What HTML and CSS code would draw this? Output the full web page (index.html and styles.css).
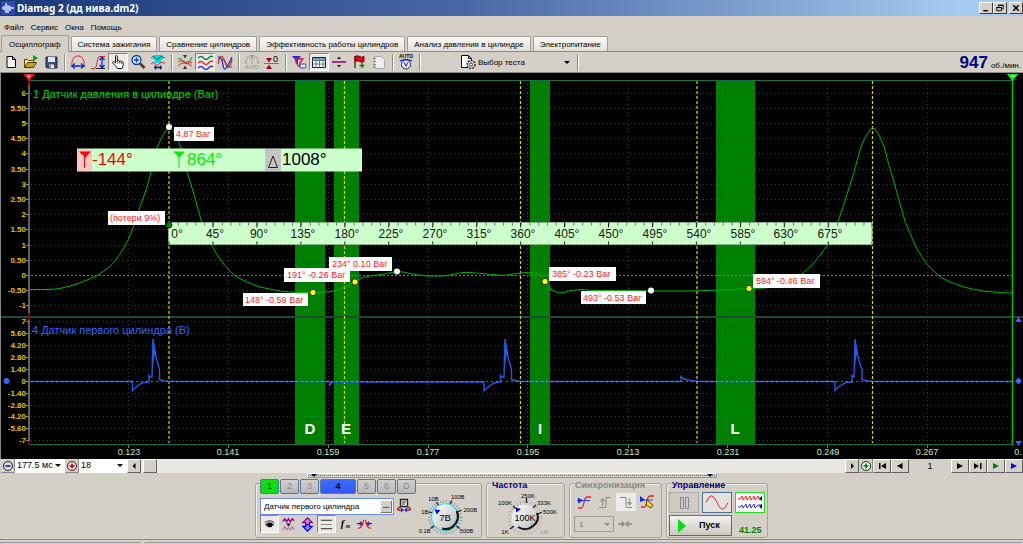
FILE: index.html
```html
<!DOCTYPE html>
<html lang="ru">
<head>
<meta charset="utf-8">
<title>Diamag 2 (дд нива.dm2)</title>
<link rel="stylesheet" href="styles.css">
</head>
<body>
<header class="titlebar">
  <svg class="app-icon" viewBox="0 0 14 14"><rect width="14" height="14" fill="#3048b0"/><path d="M1 7h1M3 5v4M5 2v10M7 4v8M9 5v5M11 6v2M12 7h1" stroke="#dfe8ff" stroke-width="1.5"/></svg>
  <h1 class="title">Diamag 2 (дд нива.dm2)</h1>
  <div class="win-buttons">
    <button class="win-btn" aria-label="Свернуть"><svg viewBox="0 0 12 11"><path d="M3 8.500h5" stroke="#000" stroke-width="1.6"/></svg></button>
    <button class="win-btn" aria-label="Восстановить"><svg viewBox="0 0 12 11"><path d="M4.500 4V2.500h5v4h-2M2.500 5h5v3.500h-5zM4 2.500h6M2 5h6" fill="none" stroke="#000"/></svg></button>
    <button class="win-btn win-close" aria-label="Закрыть"><svg viewBox="0 0 12 11"><path d="M3 2.500l6 6M9 2.500l-6 6" stroke="#000" stroke-width="1.700"/></svg></button>
  </div>
</header>
<nav class="menu">
  <button class="menu-item">Файл</button><button class="menu-item">Сервис</button><button class="menu-item">Окна</button><button class="menu-item">Помощь</button>
</nav>
<div class="tabs" role="tablist">
  <button class="tab active" role="tab" aria-selected="true">Осциллограф</button>
  <button class="tab" role="tab">Система зажигания</button>
  <button class="tab" role="tab">Сравнение цилиндров</button>
  <button class="tab" role="tab">Эффективность работы цилиндров</button>
  <button class="tab" role="tab">Анализ давления в цилиндре</button>
  <button class="tab" role="tab">Электропитание</button>
</div>
<div class="toolbar">
  <button class="tool" aria-label="Новый"><svg viewBox="0 0 16 16"><path d="M4 2.500h5.500l3 3V13.500H4z" fill="#fff" stroke="#000"/><path d="M9.500 2.500v3h3" fill="none" stroke="#000"/></svg></button>
  <button class="tool" aria-label="Открыть"><svg viewBox="0 0 16 16"><path d="M1.500 13V5.500h3l1 1h5V9" fill="#ffe97a" stroke="#5a4a00"/><path d="M1.500 13.500l3-5h9l-3 5z" fill="#c8a020" stroke="#4a3c00"/><path d="M10 1l5 3-5 3.500z" fill="#0a0"/></svg></button>
  <button class="tool" aria-label="Сохранить"><svg viewBox="0 0 16 16"><path d="M3 3h11v11H4l-1-1z" fill="#44506a" stroke="#1d2740"/><path d="M5 3h7v5H5z" fill="#dfe8f6"/><path d="M6 10.500h5V14H6z" fill="#e8e8f0"/><path d="M7 11v3" stroke="#223"/></svg></button>
  <i class="sep"></i>
  <button class="tool" aria-label="Период"><svg viewBox="0 0 16 16"><path d="M1 13c1-2 1-3 1-5C3 3.500 5 2 8 2s5 1.500 6 6c0 2 0 3 1 5" fill="none" stroke="#f02020"/><path d="M2 12h12M5 9.500L2 12l3 2.500M11 9.500l3 2.500-3 2.500" fill="none" stroke="#0030d0" stroke-width="1.300"/></svg></button>
  <button class="tool" aria-label="Амплитуда"><svg viewBox="0 0 16 16"><path d="M1 14.500h3c4 0 2-12 6-12h5" fill="none" stroke="#f02020"/><path d="M12 3v10M9.500 6L12 3l2.500 3M9.500 11l2.500 3 2.500-3" fill="none" stroke="#0030d0" stroke-width="1.300"/><path d="M6 14.500h9" stroke="#222"/></svg></button>
  <button class="tool pressed" aria-label="Рука"><svg viewBox="0 0 16 16"><path d="M5.500 9V2.500c0-1.300 1.800-1.300 1.800 0V7c.5-1 1.900-.7 2 .3.600-.8 1.800-.5 2 .5.700-.6 1.900-.3 1.900.8 0 2.500 0 3.500-1.200 5.900H7.500C6 12 4.500 11 2.600 8.800 2 7.800 3.500 7 4.300 8z" fill="#fff" stroke="#111"/><path d="M7.300 7v2.500M9.300 7.500v2M11.300 8v2" stroke="#111" stroke-width=".8"/></svg></button>
  <button class="tool" aria-label="Лупа"><svg viewBox="0 0 16 16"><circle cx="6.500" cy="6" r="4.500" fill="#cfe8ff" stroke="#1040a0" stroke-width="1.300"/><path d="M6.500 3.500v5M4 6h5" stroke="#1040d0" stroke-width="1.300"/><path d="M10 9.500l4.500 4.500" stroke="#603010" stroke-width="2.500"/></svg></button>
  <button class="tool" aria-label="Диапазон"><svg viewBox="0 0 16 16"><path d="M3 1h10v3l-2.500 3 2.500 2H3l2.500-2L3 4z" fill="#00d8e0"/><path d="M1 4q2-3 4 0t4 0 6 0" fill="none" stroke="#087850"/><path d="M1 10q2-3 4 0t4 0 6-1" fill="none" stroke="#f03030"/><path d="M4 13.500h8M5.500 11.500v4M10.500 11.500v4" stroke="#002080" stroke-width="1.300"/></svg></button>
  <i class="sep"></i>
  <button class="tool" aria-label="Совместить"><svg viewBox="0 0 16 16"><path d="M1 5q2-2 4 1t6 2q2 0 4-5" fill="none" stroke="#108020"/><path d="M1 8q3-3 6 0t8 0M1 12q3-4 7-3t7 3" fill="none" stroke="#f02020"/><path d="M6 1h4L8 4.500zM6 15h4l-2-3.500z" fill="#333"/></svg></button>
  <button class="tool pressed" aria-label="Раздельно"><svg viewBox="0 0 16 16"><path d="M1 4q3-3 5.500 0t5 0T16 3" fill="none" stroke="#008040" stroke-width="1.300"/><path d="M1 9q3-3 5.500 0t5 0T16 8" fill="none" stroke="#f02020" stroke-width="1.300"/><path d="M1 14q3-3 5.500 0t5 0T16 13" fill="none" stroke="#2030e0" stroke-width="1.300"/></svg></button>
  <button class="tool" aria-label="Вместе"><svg viewBox="0 0 16 16"><path d="M1 10Q4-4 8 8t7-3" fill="none" stroke="#f02020" stroke-width="1.300"/><path d="M1 3q4 0 5 8t5 0 4-8" fill="none" stroke="#2030e0" stroke-width="1.300"/><path d="M1 6q3-4 7 2t7 5" fill="none" stroke="#107040"/></svg></button>
  <i class="sep"></i>
  <button class="tool" aria-label="Авто" disabled><svg viewBox="0 0 16 16"><path d="M2 10C1 5 4 1.500 8 1.500S15 5 14 10M8 2v8M5.500 5L8 2l2.500 3" fill="none" stroke="#999"/><text x="8" y="15" class="tiny gray-fill" text-anchor="middle">AUTO</text></svg></button>
  <button class="tool" aria-label="Ноль"><svg viewBox="0 0 16 16"><path d="M0 9.500h15" stroke="#777"/><path d="M2 4h6L5 8.500zM2 15h6l-3-4.500z" fill="#b00010"/><text x="9" y="8" class="zero">0</text></svg></button>
  <i class="sep"></i>
  <button class="tool" aria-label="Фильтр"><svg viewBox="0 0 16 16"><path d="M1 2h9L7 6v5L4.500 9V6z" fill="#1030f0"/><path d="M4 5h8l-3 3.500V13l-2.500-2V9z" fill="none" stroke="#f01030" stroke-width="1.300"/><rect x="9" y="10" width="6" height="4" rx="1.500" fill="#dde8ff" stroke="#2040a0"/></svg></button>
  <button class="tool pressed" aria-label="Таблица"><svg viewBox="0 0 16 16"><path d="M1.500 3.500h13v10h-13z" fill="#fff" stroke="#123"/><path d="M2 4h12v2H2z" fill="#7aaee8"/><path d="M1.500 6.500h13M5 4v9.500M8.500 4v9.500M12 4v9.500M2 10h12" stroke="#678"/></svg></button>
  <button class="tool" aria-label="Линия"><svg viewBox="0 0 16 16"><path d="M1 8h14" stroke="#900080" stroke-width="1.500"/><path d="M6 5h4L8 2.500zM6 11h4l-2 2.500z" fill="#222"/></svg></button>
  <button class="tool" aria-label="Флаг"><svg viewBox="0 0 16 16"><path d="M4 2v12" stroke="#502010" stroke-width="1.300"/><path d="M4 2.500q2.500-1.500 4.500 0t4.500 0v5q-2 1.500-4.500 0T4 7.500z" fill="#e00018" stroke="#700"/><path d="M11 9v5M8.500 11.500h5" stroke="#080" stroke-width="1.500"/></svg></button>
  <button class="tool" aria-label="Отчёт" disabled><svg viewBox="0 0 16 16"><path d="M3.500 2.500h7l3 3v9h-10z" fill="#eee" stroke="#aaa"/><path d="M2 4.500h3M2 7.500h3M2 10.500h3M2 13h3" stroke="#888"/></svg></button>
  <i class="sep"></i>
  <button class="tool" aria-label="Автоизмерение"><svg viewBox="0 0 16 16"><text x="8" y="4" class="tiny bold" text-anchor="middle">AUTO</text><path d="M2 7q6-3 12 0" fill="none" stroke="#2040e0" stroke-width="1.500"/><circle cx="8" cy="10.500" r="4.500" fill="#eef" stroke="#224"/><path d="M6 8.500l2 3.500 2-3.500" fill="none" stroke="#2040f0" stroke-width="1.200"/></svg></button>
  <i class="sep"></i>
  <label class="test-pick">
    <svg class="tool-ico" viewBox="0 0 16 16"><path d="M1.500 1.500h7l3 3v9h-10z" fill="#fff" stroke="#111"/><path d="M8.500 1.500v3h3" fill="none" stroke="#111"/><circle cx="11" cy="10.500" r="4" fill="#c8d8c8" stroke="#334" stroke-width="1.500" stroke-dasharray="2 1"/><circle cx="11" cy="10.500" r="1.500" fill="#fff" stroke="#344"/></svg>
    <span class="pick flat"><select aria-label="Выбор теста"><option>Выбор теста</option></select></span>
  </label>
  <i class="sep"></i>
  <div class="rpm"><b class="rpm-value">947</b><span class="rpm-unit">об./мин.</span></div>
</div>

<main class="scope">
<svg class="plot" viewBox="0 73 1023 386" role="img" aria-label="Осциллограмма">
  <rect y="73" width="1023" height="386" fill="#000"/>
  <g fill="#008000"><rect x="295" y="81" width="30" height="363"/><rect x="334" y="81" width="25" height="363"/><rect x="530" y="81" width="20" height="363"/><rect x="716" y="81" width="39" height="363"/></g>
  <path class="grid" d="M31 93.500H1012M31 108.500H1012M31 123.500H1012M31 138.500H1012M31 153.500H1012M31 169.500H1012M31 184.500H1012M31 199.500H1012M31 214.500H1012M31 229.500H1012M31 245.500H1012M31 260.500H1012M31 290.500H1012M31 305.500H1012M31 321.500H1012M31 333.500H1012M31 345.500H1012M31 357.500H1012M31 369.500H1012M31 393.500H1012M31 405.500H1012M31 416.500H1012M31 428.500H1012M31 440.500H1012"/>
  <path class="grid" d="M128.500 84V444M228.500 84V444M328.500 84V444M428.500 84V444M527.500 84V444M628.500 84V444M727.500 84V444M827.500 84V444M927.500 84V444"/>
  <path d="M31 275.500H1012" stroke="#777" stroke-dasharray="2 2"/>
  <path d="M29 80.500H1013M29 444.500H1013" stroke="#1c7048"/>
  <path d="M0 317H1023" stroke="#1c4a34" stroke-width="2"/>
  <path d="M128.500 445v3M228.500 445v3M328.500 445v3M428.500 445v3M527.500 445v3M628.500 445v3M727.500 445v3M827.500 445v3M927.500 445v3" stroke="#777"/>
  <path d="M.5 73V459" stroke="#888"/>
  <path d="M29 85V313M29 320V441" stroke="#606060" stroke-width="2"/>
  <path d="M29 80V85M29 313V320M29 441V445" stroke="#900" stroke-width="2"/>
  <path d="M26 93.500h3M26 108.500h3M26 123.500h3M26 138.500h3M26 153.500h3M26 169.500h3M26 184.500h3M26 199.500h3M26 214.500h3M26 229.500h3M26 245.500h3M26 260.500h3M26 275.500h3M26 290.500h3M26 305.500h3M26 321.500h3M26 333.500h3M26 345.500h3M26 357.500h3M26 369.500h3M26 381.500h3M26 393.500h3M26 405.500h3M26 416.500h3M26 428.500h3M26 440.500h3" stroke="#888"/>
  <g class="scale">
    <text x="26" y="96">6</text><text x="26" y="111">5.50</text><text x="26" y="126">5</text><text x="26" y="141">4.50</text><text x="26" y="156">4</text><text x="26" y="172">3.50</text><text x="26" y="187">3</text><text x="26" y="202">2.50</text><text x="26" y="217">2</text><text x="26" y="232">1.50</text><text x="26" y="248">1</text><text x="26" y="263">0.50</text><text x="26" y="278">0</text><text x="26" y="293">-0.50</text><text x="26" y="308">-1</text>
    <text x="26" y="324">7</text><text x="26" y="336">5.60</text><text x="26" y="348">4.20</text><text x="26" y="360">2.80</text><text x="26" y="372">1.40</text><text x="26" y="384">0</text><text x="26" y="396">-1.40</text><text x="26" y="408">-2.80</text><text x="26" y="419">-4.20</text><text x="26" y="431">-5.60</text><text x="26" y="443">-7</text>
  </g>
  <g class="times">
    <text x="129" y="455">0.123</text><text x="228" y="455">0.141</text><text x="328" y="455">0.159</text><text x="428" y="455">0.177</text><text x="528" y="455">0.195</text><text x="628" y="455">0.213</text><text x="728" y="455">0.231</text><text x="828" y="455">0.249</text><text x="927" y="455">0.267</text><text x="1018" y="455">0.</text>
  </g>
  <path d="M169 81V443M344.500 81V443M520.500 81V443M697 81V443M872.500 81V443" stroke="#d8d800" stroke-width="1.200" stroke-dasharray="3 2"/>
  <text x="33" y="98" class="chan green">1 Датчик давления в цилиндре (Bar)</text>
  <text x="32" y="334" class="chan blue">4 Датчик первого цилиндра (В)</text>

  <path fill="none" stroke="#00b400" d="M29 289.500H48L56 289 62 288 70 286 77 284 87 280 98 275 104 271 110 266.500 115 261 120 254 124 247.500 128 240 131 233 134 225 140 207 147 187 151 172 157 148 160 141 162 137 164.500 132.500 167 129.500 169 127.500 171 128.500 173 130.500 176 135 178 140 181 148 184 160 187 172 193.500 193 201.500 221.500 206 233 212 246 216 253 220 259 224 264.500 228 269 232 273 237 277 245 281 253 284.500 260 287 267 288.500 275 290 283 291.500 297 292.500H315L327 292 334 291 340 289 348 285.500 355 281.500 363 277.500 370 276 377 275 387 273.500 397 271.500 403 272 410 273.500 418 275 427 276H443L450 275 457 273.500 463 272.500 470 272.500 487 274 503 275.500 510 274.500 517 273.500 527 272.500 537 273.500 542 276.500 545 281.500 548 286 552 290 556 292 560 293 566 292 570 290.500 575 290 583 289.500 592 290.500H625L651 291H690L720 290 749 288.500 765 288 775 286.500 787 282 795 278 803 273 809 268 815 261.500 821 254 827 245.500 833 234 838 221.500 842 210 848 191 854 172 860.500 148 863.500 141 866 136 868.500 132 870.500 129 872.500 127.500 875 129 877 132 880 137 884.500 148 887.500 160 891 172 897 193 905 221.500 910 233 915.500 246 919.500 253 923.500 259 927.500 264.500 931.500 269 936 273 940.500 277 948 281 956.500 284.500 964 287 970 288.500 978 290 986 291.500 1000 292.500 1012 293"/>
  <path fill="none" stroke="#2458e8" stroke-width="1.400" d="M29 381.500H132.500V390.500L135 388 138 385.500 142 383 149 382V375.500L150 377H152L153 339 154 345 155 350 156 357 158 364 159.500 369V379.500L165 381 175 381.500H330V385L332 382H484V390.500L487 388 490 385.500 494 383 500.500 382V375.500L501.500 377H504L505 339 506 345 507 350 508 357 510 364 511.500 369V379.500L517 381 525 381.500H681V376.500L684 379 691 380.500 700 381.500H835V390.500L838 387.500 842 384.500 846 382.500 852 382V375.500L854 377 855 339 856 345 857 350 858 357 860 364 862 369V379.500L867 381 875 381.500H1012"/>
  <path fill="#2458e8" d="M152 376L153 339 155.500 352 154 358zM504 376L505 339 507.500 352 506 358zM854 376L855 339 857.500 352 856 358z"/>
  <path d="M31 381.500H1012" stroke="#a0b8e0" stroke-opacity=".6" stroke-dasharray="2 3"/>
  <path d="M1012.500 80V445" stroke="#00c000" stroke-width="1.500"/>

  <g class="phase"><text x="310" y="434">D</text><text x="346" y="434">E</text><text x="540" y="434">I</text><text x="735" y="434">L</text></g>

  <rect x="77" y="148.500" width="285" height="23" fill="#cfc"/><rect x="77" y="149" width="15" height="22" fill="#ffc4c4"/><rect x="265" y="149" width="16" height="22" fill="#c4c4c4"/>
  <path d="M79 151.500h12l-5.500 6z" fill="red"/><path d="M84.500 156v12" stroke="red"/><path d="M173 151.500h12l-5.500 6z" fill="#0e0"/><path d="M179 156v12" stroke="#0e0"/><path d="M268.500 167.500L273 156l4.500 11.500z" fill="none" stroke="#222"/>
  <g class="angles"><text x="92" y="165" fill="#f00">-144°</text><text x="187" y="165" fill="#0e0">864°</text><text x="282" y="165" fill="#000">1008°</text></g>

  <rect x="168.500" y="222.500" width="703.500" height="22" fill="#cfc" stroke="#8ab08a"/>
  <path d="M169 224H872" stroke="#667766" stroke-width="3" stroke-dasharray="1 7.790"/>
  <path d="M168.500 225H872" stroke="#222" stroke-width="5" stroke-dasharray="1 42.950"/><path d="M168.500 243H872" stroke="#222" stroke-width="3" stroke-dasharray="1 42.950"/>
  <g class="ruler"><text x="177" y="238">0°</text><text x="215" y="238">45°</text><text x="259" y="238">90°</text><text x="303" y="238">135°</text><text x="347" y="238">180°</text><text x="391" y="238">225°</text><text x="435" y="238">270°</text><text x="479" y="238">315°</text><text x="523" y="238">360°</text><text x="567" y="238">405°</text><text x="611" y="238">450°</text><text x="655" y="238">495°</text><text x="699" y="238">540°</text><text x="743" y="238">585°</text><text x="786" y="238">630°</text><text x="830" y="238">675°</text></g>

  <g fill="#fff"><rect x="174" y="127" width="40" height="14"/><rect x="108" y="211" width="57" height="14"/><rect x="329" y="257" width="63" height="14"/><rect x="284" y="268" width="66" height="14"/><rect x="243" y="293" width="65" height="13"/><rect x="549" y="267" width="67" height="14"/><rect x="581" y="291" width="65" height="13"/><rect x="753" y="274" width="67" height="14"/></g>
  <g class="notes"><text x="176" y="137">4.87 Bar</text><text x="110" y="221">(потери 9%)</text><text x="332" y="267">234° 0.10 Bar</text><text x="287" y="278">191° -0.26 Bar</text><text x="245" y="303">148° -0.59 Bar</text><text x="552" y="277">385° -0.23 Bar</text><text x="583" y="301">493° -0.53 Bar</text><text x="756" y="284">594° -0.46 Bar</text></g>

  <g fill="#fff"><circle cx="169" cy="127" r="3"/><circle cx="397" cy="271.500" r="3"/><circle cx="651" cy="290.500" r="3"/></g>
  <g fill="#ff0" stroke="#220"><circle cx="313" cy="292.500" r="3.200"/><circle cx="355" cy="282" r="3.200"/><circle cx="545" cy="281.500" r="3.200"/><circle cx="749" cy="288.500" r="3.200"/></g>
  <circle cx="169" cy="225" r="3" fill="#080" stroke="#031"/>
  <circle cx="6.500" cy="381" r="3" fill="#36f"/>
  <path d="M23 74h12l-6 7z" fill="#f01818"/><path d="M27 76h4M29 75v3" stroke="#fbb"/><path d="M1006.500 74h12l-6 7z" fill="#10e810"/><path d="M1011 76h4" stroke="#cfc"/>
  <path d="M1015 322h7l-3.500-5zM1015 441h7l-3.500 5zM1015 381l3.500-3.500 3.500 3.500-3.500 3.500z" fill="#36f"/>
</svg>
</main>

<div class="timebar">
  <button class="round" aria-label="Сжать"><svg viewBox="0 0 12 12"><circle cx="6" cy="6" r="4.500" fill="#ddd" stroke="#222"/><path d="M3.500 6h5" stroke="#00a" stroke-width="1.500"/></svg></button>
  <span class="pick"><select class="w-span" aria-label="Развёртка"><option>177.5 мс</option></select></span>
  <button class="round" aria-label="Растянуть"><svg viewBox="0 0 12 12"><circle cx="6" cy="6" r="4.500" fill="#fdd" stroke="#222"/><path d="M3.500 6h5M6 3.500v5" stroke="#a00" stroke-width="1.500"/></svg></button>
  <span class="pick"><select class="w-zoom" aria-label="Масштаб"><option>18</option></select></span>
  <div class="track">
    <button class="bevel" aria-label="Влево"><svg viewBox="0 0 12 12"><path d="M7.500 3v6L4.500 6z"/></svg></button>
    <button class="bevel thumb" aria-label="Ползунок"></button>
    <button class="bevel last" aria-label="Вправо"><svg viewBox="0 0 12 12"><path d="M5 3v6l3-3z"/></svg></button>
  </div>
  <button class="round" aria-label="Добавить"><svg viewBox="0 0 12 12"><circle cx="6" cy="6" r="4.500" fill="#efe" stroke="#222"/><path d="M3.500 6h5M6 3.500v5" stroke="#080" stroke-width="1.700"/></svg></button>
  <button class="bevel nav" aria-label="Первый"><svg viewBox="0 0 12 12"><path d="M3 3h1.500v6H3zM10 3v6L5 6z"/></svg></button>
  <button class="bevel nav" aria-label="Предыдущий"><svg viewBox="0 0 12 12"><path d="M8.500 3v6L3 6z"/></svg></button>
  <output class="page">1</output>
  <button class="bevel nav" aria-label="Следующий"><svg viewBox="0 0 12 12"><path d="M3 3v6l6-3z"/></svg></button>
  <button class="bevel nav" aria-label="Последний"><svg viewBox="0 0 12 12"><path d="M2 3v6l5-3zM8 3h1.500v6H8z"/></svg></button>
  <button class="bevel nav" aria-label="Воспроизвести"><svg viewBox="0 0 12 12"><path d="M3 3v6l6-3z" fill="#008000"/></svg></button>
  <button class="bevel nav" aria-label="Повтор"><svg viewBox="0 0 12 12"><path d="M3 3v6l6-3z" fill="#00f"/></svg></button>
</div>

<div class="splitter"><span class="grip"></span></div>

<div class="panels">
  <section class="group channel">
    <div class="channel-main">
      <div class="chan-tabs">
        <button class="ch on">1</button><button class="ch">2</button><button class="ch">3</button><button class="ch sel">4</button><button class="ch">5</button><button class="ch">6</button><button class="ch">D</button>
      </div>
      <div class="name-row">
        <span class="name-box"><input type="text" aria-label="Датчик" value="Датчик первого цилиндра"><button class="more" aria-label="Выбрать">...</button></span>
        <button class="tool" aria-label="Прибор"><svg viewBox="0 0 16 16"><path d="M4.500 1.500h7v7h-7z" fill="#eee" stroke="#222" stroke-width="1.400"/><path d="M6 4h4M6 6h3" stroke="#333"/><path d="M5 9q-4 .5-3 3h3M11 9q4 .5 3 3h-3" fill="none" stroke="#d01020" stroke-width="1.300"/><path d="M5 9.500v5L8 12zM11 9.500v5L8 12z" fill="#1030e0"/></svg></button>
      </div>
      <div class="chan-tools">
        <button class="tool pressed" aria-label="Видимость"><svg viewBox="0 0 16 16"><path d="M3 8q5-5 10 0-5 6-10 0z" fill="#444"/><circle cx="8.500" cy="8.500" r="2.500" fill="#000"/><path d="M3 6q5-4 10 0" fill="none" stroke="#222"/></svg></button>
        <button class="tool" aria-label="Масштаб сигнала"><svg viewBox="0 0 16 16"><path d="M2 5l2-3 2 3 2-3 2 3 2-3 2 2" fill="none" stroke="#900090" stroke-width="1.500"/><path d="M2 14l2-4 2 4 2-3 2 3 2-4 2 4" fill="none" stroke="#c040b0"/><path d="M5.500 7h5L8 10z" fill="#111"/></svg></button>
        <button class="tool" aria-label="Смещение"><svg viewBox="0 0 16 16"><path d="M8 1L3 6h3v2h4V6h3z" fill="#c8c" stroke="#800080" stroke-width="1.300"/><path d="M8 15l-5-5h3V8h4v2h3z" fill="#88f" stroke="#00e" stroke-width="1.300"/></svg></button>
        <button class="tool pressed" aria-label="Линии"><svg viewBox="0 0 16 16"><path d="M2 3.500h12M2 12.500h12" stroke="#222"/><path d="M2 8h12" stroke="#222" stroke-dasharray="1 1"/></svg></button>
        <button class="tool" aria-label="Функция"><svg viewBox="0 0 16 16"><text x="3" y="11" class="fx">f</text><text x="8" y="12" class="fx small">м</text></svg></button>
        <button class="tool" aria-label="Центр"><svg viewBox="0 0 16 16"><path d="M1 12q5 0 6-9M9 3q1 9 6 9" fill="none" stroke="#f02020" stroke-width="1.300"/><path d="M0 7h5M3 5l2.500 2L3 9M16 7h-5M13 5l-2.500 2L13 9" fill="none" stroke="#1030b0" stroke-width="1.200"/></svg></button>
      </div>
    </div>
    <svg class="knob" viewBox="418 487 66 50">
      <defs><linearGradient id="k" x1="0" y1="0" x2="1" y2="1"><stop offset="0" stop-color="#fff"/><stop offset=".7" stop-color="#ccc"/><stop offset="1" stop-color="#888"/></linearGradient></defs>
      <circle cx="447" cy="517.500" r="16.500" fill="none" stroke="#999" stroke-width="2.500" stroke-dasharray="1 2"/>
      <path d="M432 529l4-3M430 512l4 1M438 502l3 4M454 500l-2 4M464 510l-4 2M462 529l-4-3" stroke="#222" stroke-width="1.300"/>
      <circle cx="447" cy="517.500" r="14" fill="url(#k)" stroke="#30d8e8" stroke-width="1.200"/><path d="M459 511q4 9-4 16-5 4-11 2" fill="none" stroke="#111" stroke-width="2.200"/>
      <path d="M436 509.500l6 .5-3.500 4.500z" fill="#00e"/>
      <text x="447" y="521" class="dial">7В</text>
      <g class="marks"><text x="426" y="534">0.1В</text><text x="426" y="514">1В</text><text x="435" y="501">10В</text><text x="460" y="499">100В</text><text x="473" y="512">200В</text><text x="469" y="534">500В</text></g>
    </svg>
  </section>
  <section class="group freq">
    <h2 class="legend">Частота</h2>
    <svg class="knob" viewBox="494 490 66 46">
      <circle cx="526" cy="518" r="16" fill="none" stroke="#aaa" stroke-width="2.500" stroke-dasharray="1 2.500"/>
      <path d="M511 529l4-3M514 506l4 4M527.500 498v5M537 505l-3 3M543 512l-4 2" stroke="#222" stroke-width="1.300"/>
      <circle cx="526" cy="518" r="13" fill="url(#k)"/><path d="M538 513q3 8-4 13-7 6-15 1" fill="none" stroke="#111" stroke-width="2"/>
      <path d="M517 507.500l5 1.500-5 3.500z" fill="#00e"/>
      <text x="526" y="521" class="dial small">100K</text>
      <g class="marks"><text x="506" y="534">1K</text><text x="506" y="505">100K</text><text x="529" y="498">250K</text><text x="545" y="505">333K</text><text x="551" y="514">500K</text><text x="545" y="534" class="dim">1M</text></g>
    </svg>
  </section>
  <section class="group sync">
    <h2 class="legend off">Синхронизация</h2>
    <div class="sync-tools">
      <button class="tool" aria-label="Уровень"><svg viewBox="0 0 16 16"><path d="M2 14h3c4 0 2-11 6-11h4" fill="none" stroke="#f02020" stroke-width="1.300"/><path d="M1 6.500h13" stroke="#2040e0"/><path d="M2 3.500l5 3-5 3z" fill="#1030e0"/></svg></button>
      <button class="tool" aria-label="Фронт" disabled><svg viewBox="0 0 16 16"><path d="M2 13.500h7V3.500h5" fill="none" stroke="#888"/><path d="M5.500 12V5M3.500 7.500l2-3 2 3" fill="none" stroke="#999" stroke-width="1.300"/></svg></button>
      <button class="tool lit" aria-label="Спад" disabled><svg viewBox="0 0 16 16"><path d="M2 3.500h6v10h6" fill="none" stroke="#888"/><path d="M11.500 4v7M9.500 8l2 3 2-3" fill="none" stroke="#999" stroke-width="1.300"/></svg></button>
      <button class="tool" aria-label="Ручная"><svg viewBox="0 0 16 16"><path d="M2 13h3c4 0 2-11 6-11h4" fill="none" stroke="#f02020" stroke-width="1.300"/><path d="M1 6h13" stroke="#2040e0"/><path d="M1 2l5 4-5 2z" fill="#1030e0"/><path d="M8 6l6 5-2 3-5-3z" fill="#fd0" stroke="#542"/></svg></button>
    </div>
    <div class="sync-row">
      <span class="pick dull"><select class="w-sync" aria-label="Канал" disabled><option>1</option></select></span>
      <button class="tool" aria-label="Сблизить" disabled><svg viewBox="0 0 16 16"><path d="M1 8h6M4.500 5.500L7 8l-2.500 2.500M15 8H9M11.500 5.500L9 8l2.500 2.500" fill="none" stroke="#888" stroke-width="1.400"/></svg></button>
    </div>
  </section>
  <section class="group control">
    <h2 class="legend">Управление</h2>
    <div class="modes">
      <button class="mode pause" aria-label="Пауза" disabled><svg viewBox="0 0 28 19"><path d="M10.500 4.500h3v11h-3zM15.500 4.500h3v11h-3z" fill="#ccc" stroke="#888"/></svg></button>
      <button class="mode wave" aria-label="Синус"><svg viewBox="0 0 28 19"><path d="M3 9.500Q8.500-4 14 9.500T25 9.500" fill="none" stroke="#f02020"/></svg></button>
      <button class="mode multi" aria-label="Поток"><svg viewBox="0 0 28 19"><path d="M2 6h2l2-3 1 4 3-4 1 4 3-4 1 4 3-4 1 4 3-4 1 3h2" fill="none" stroke="#f02020"/><path d="M2 14h2l2-2 1 3 3-4 1 4 3-4 1 4 3-4 1 4 3-3h3" fill="none" stroke="#2030f0"/><path d="M26 3v5l-3-2.500zM26 11v5l-3-2.500z" fill="#006"/></svg></button>
    </div>
    <div class="run-row">
      <button class="run"><svg viewBox="0 0 8 14"><path d="M0 0v14l8-7z" fill="#00e010"/></svg><span>Пуск</span></button>
      <output class="rate">41.25</output>
    </div>
  </section>
</div>
<footer class="status"><span class="cell first"></span><span class="cell"></span></footer>
</body>
</html>
```
FILE: styles.css
```css
* { box-sizing: border-box; }
html, body { height: 100%; }
body {
  margin: 0;
  display: flex;
  flex-direction: column;
  background: #d4d0c8;
  color: #000;
  font: 8px/11px "Liberation Sans", Arial, sans-serif;
  overflow: hidden;
}
button, select, input { font: inherit; color: inherit; margin: 0; padding: 0; border: 0; background: none; border-radius: 0; }
svg { display: block; }
body > * { flex: none; }

.titlebar { display: flex; align-items: center; height: 16px; padding-left: 1px; background: linear-gradient(90deg, #1a3878, #4867a4 45%, #a6caf0 94%); }
.app-icon { width: 14px; height: 14px; }
.title { margin: 0 auto 0 2px; color: #fff; font: bold 10px/14px "Noto Sans", "Open Sans", sans-serif; }
.win-buttons { display: flex; }
.win-btn { width: 14px; height: 12px; background: #d4d0c8; border: 1px solid; border-color: #fff #404040 #404040 #fff; }
.win-btn svg { width: 12px; height: 10px; }
.win-close { margin-left: 2px; }

.menu { display: flex; gap: 7px; height: 19px; padding: 5px 4px 0; }
.menu-item { line-height: 11px; height: 12px; }

.tabs { display: flex; align-items: flex-end; gap: 2px; height: 17px; padding-left: 1px; border-bottom: 1px solid #8c8a84; }
.tab { height: 15px; padding: 0 6px; white-space: nowrap; background: linear-gradient(#fafaf8, #e2dfd9); border: 1px solid #a09d96; border-bottom: 0; border-radius: 2px 2px 0 0; }
.tab.active { height: 17px; margin-bottom: -1px; padding: 0 7px; background: #d4d0c8; }

.toolbar { display: flex; align-items: center; height: 21px; padding: 0 2px 0 1px; border-bottom: 1px solid #8c8a84; }
.tool { display: grid; place-items: center; width: 20px; height: 18px; flex: none; }
.tool svg, .tool-ico { width: 16px; height: 16px; overflow: visible; flex: none; }
.pressed { background: #eceae6; border: 1px solid; border-color: #87847d #fff #fff #87847d; }
.lit { background: #eeece8; }
.sep { width: 2px; height: 17px; margin: 0 2px 0 3px; border-left: 1px solid #8c8a84; border-right: 1px solid #fff; flex: none; }
.tiny { font: 5px "Liberation Sans", sans-serif; }
.bold { font-weight: bold; }
.gray-fill { fill: #888; }
.zero { font: 9px "Liberation Sans", sans-serif; }
.test-pick { display: flex; align-items: center; width: 151px; padding-left: 37px; }
.rpm { display: flex; align-items: baseline; gap: 3px; margin-left: auto; }
.rpm-value { color: #000080; font-size: 17px; line-height: 19px; }
.rpm-unit { font-size: 8px; }

.pick { position: relative; display: flex; background: #fff; }
.pick select { appearance: none; width: 100%; height: 13px; padding: 0 12px 0 2px; opacity: 1; }
.pick::after { content: ""; position: absolute; right: 4px; top: 5px; border: 3px solid transparent; border-top-color: #000; border-bottom: 0; pointer-events: none; }
.flat { flex: 1; background: none; }
.pick select.w-span { width: 50px; }
.pick select.w-zoom { width: 48px; }
.pick select.w-sync { width: 40px; height: 16px; padding-left: 4px; color: #777; border: 1px solid #999; }
.pick.dull { background: #d4d0c8; }
.dull::after { border-top-color: #888; top: 7px; }

.scope { background: #000; }
.plot { width: 100%; height: auto; font-family: "Liberation Sans", Arial, sans-serif; }
.grid { fill: none; stroke: #606060; stroke-opacity: 0.6; stroke-dasharray: 1 3; }
.scale { font-size: 8px; font-weight: bold; fill: #e8c400; text-anchor: end; }
.times { font-size: 9px; fill: #c8e8b8; text-anchor: middle; }
.chan { font-size: 11px; }
.green { fill: #00d800; }
.blue { fill: #3366ff; }
.phase { font-size: 15px; font-weight: bold; fill: #fff; text-anchor: middle; }
.angles { font-size: 17px; }
.ruler { font-size: 12px; fill: #102010; text-anchor: middle; }
.notes { font-size: 9px; fill: #ff1818; }

.timebar { display: flex; height: 14px; padding-left: 1px; font-size: 9px; }
.round { width: 14px; height: 14px; display: grid; place-items: center; border-bottom: 1px solid #888; border-right: 1px solid #888; flex: none; }
.round svg, .bevel svg { width: 12px; height: 12px; }
.track { display: flex; flex: 1; gap: 2px; background: #e9e7e3; }
.bevel { display: grid; place-items: center; width: 14px; height: 14px; background: #d4d0c8; border: 1px solid; border-color: #fff #606060 #606060 #fff; flex: none; }
.last { margin-left: auto; }
.nav { width: 18px; }
.page { width: 42px; text-align: center; line-height: 15px; }

.splitter { display: flex; justify-content: center; height: 7px; }
.grip { position: relative; width: 410px; height: 5px; border: 1px solid; border-color: #fff #999 #999 #fff; background: linear-gradient(90deg, #667 50%, transparent 50%) 10px 1px / 2px 1px repeat-x; }
.grip::before, .grip::after { content: ""; position: absolute; top: 0; left: 3px; border: 3px solid transparent; border-top-color: #114; border-bottom: 0; }
.grip::after { left: auto; right: 3px; }

.panels { display: flex; justify-content: center; gap: 4px; height: 58px; }
.group { position: relative; margin-top: 3px; height: 55px; border: 1px solid #a8a49c; border-radius: 3px; box-shadow: inset 1px 1px #f0eeea; flex: none; }
.legend { position: absolute; left: 4px; top: -4px; margin: 0; padding: 0 1px; background: #d4d0c8; color: #000080; font: bold 9px/11px "Liberation Sans", Arial, sans-serif; }
.legend.off { color: #888; }
.channel { display: flex; width: 227px; }
.channel-main { width: 161px; margin-top: -5px; padding-left: 4px; flex: none; }
.chan-tabs { display: flex; gap: 1px; }
.ch { width: 19px; height: 15px; font-size: 9px; color: #8a8a8a; background: linear-gradient(#d0d0d0, #b8b8b8); border: 1px solid #5a7890; border-radius: 2px; flex: none; }
.ch.on { background: #08e010; color: #040; }
.ch.sel { width: 36px; background: linear-gradient(#3c6cff, #3058f8); color: #000; font-weight: bold; }
.name-row { display: flex; align-items: center; margin-top: 3px; }
.name-box { display: flex; width: 134px; height: 17px; background: #fff; border: 1px solid #6c8cf0; padding: 1px; }
.name-box input { flex: 1; min-width: 0; padding-left: 2px; outline: 0; }
.more { width: 12px; line-height: 8px; background: #d4d0c8; border: 1px solid; border-color: #fff #777 #777 #fff; font-weight: bold; }
.chan-tools { display: flex; }
.chan-tools .tool { width: 19px; }
.chan-tools .tool svg { width: 15px; height: 15px; }
.fx { font: italic bold 11px "Liberation Serif", serif; }
.fx.small { font-size: 7px; }
.channel .knob { width: 64px; height: 50px; margin-top: 3px; }
.knob { overflow: visible; font-family: "Liberation Sans", Arial, sans-serif; }
.dial { font-size: 10px; text-anchor: middle; }
.dial.small { font-size: 9px; }
.marks { font-size: 6px; text-anchor: middle; }
.dim { fill: #999; }
.freq { width: 79px; padding: 6px 6px 0; }
.freq .knob { width: 66px; height: 46px; }
.sync { width: 93px; padding: 9px 4px 0; }
.sync-tools { display: flex; gap: 1px; }
.sync-row { display: flex; align-items: center; gap: 1px; margin-top: 4px; }
.control { width: 102px; padding: 8px 2px 0; }
.modes { display: flex; gap: 3px; }
.mode { width: 30px; height: 21px; border: 1px solid #4a7090; background: #e4e2de; }
.mode svg { width: 28px; height: 19px; }
.mode.pause { background: #d0ccc4; border-color: #aaa; }
.mode.multi { border-color: #20e020; background: #fff; }
.run-row { display: flex; align-items: flex-end; gap: 7px; margin-top: 2px; }
.run { display: flex; align-items: center; gap: 13px; width: 63px; height: 21px; padding-left: 8px; border: 1px solid #4a7090; background: linear-gradient(#f4f2f0, #ccc8c0); font-weight: bold; font-size: 9px; }
.run svg { width: 8px; height: 14px; }
.rate { color: #008000; font-weight: bold; font-size: 9px; }

.status { flex: 1; display: flex; gap: 3px; min-height: 4px; margin-top: 1px; padding-top: 2px; border-top: 1px solid #8c8a84; }
.cell { flex: 1; border: 1px solid; border-color: #999 #fff transparent #999; }
.first { flex: 0 0 142px; }
```
